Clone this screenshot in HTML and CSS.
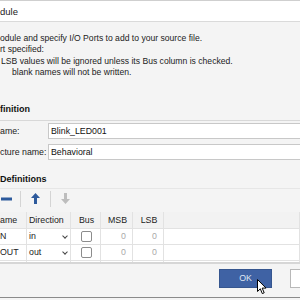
FILE: index.html
```html
<!DOCTYPE html>
<html lang="en">
<head>
    <meta charset="UTF-8">
    <title>Define Module</title>
    <link rel="stylesheet" href="styles.css">
</head>
<body>
    <div class="dialog">
        <div class="titlebar">dule</div>
        <div class="content">
            <p class="intro">
                <span class="line">odule and specify I/O Ports to add to your source file.</span>
                <span class="line">rt specified:</span>
                <span class="line l3">LSB values will be ignored unless its Bus column is checked.</span>
                <span class="line l4">blank names will not be written.</span>
            </p>

            <h2 class="section">finition</h2>
            <div class="fields">
                <div class="field">
                    <span class="label">ame:</span>
                    <input class="text" value="Blink_LED001">
                </div>
                <div class="field">
                    <span class="label">cture name:</span>
                    <input class="text" value="Behavioral">
                </div>
            </div>

            <h2 class="section ports">Definitions</h2>
            <div class="toolbar">
                <span class="tool"><svg width="11" height="4" viewBox="0 0 11 4"><rect width="11" height="3" y="0.5" fill="#2d5a9c"/></svg></span>
                <span class="sep"></span>
                <span class="tool"><svg width="9" height="11" viewBox="0 0 9 11"><path d="M4.5 0 L9 5 L6 5 L6 11 L3 11 L3 5 L0 5 Z" fill="#2d5a9c"/></svg></span>
                <span class="sep"></span>
                <span class="tool"><svg width="9" height="11" viewBox="0 0 9 11"><path d="M4.5 11 L9 6 L6 6 L6 0 L3 0 L3 6 L0 6 Z" fill="#bdbdbd"/></svg></span>
            </div>

            <div class="grid-wrap">
                <table class="ports-table">
                    <tr>
                        <th class="c-name">ame</th>
                        <th class="c-dir">Direction</th>
                        <th class="c-bus center">Bus</th>
                        <th class="c-msb center">MSB</th>
                        <th class="c-lsb center">LSB</th>
                        <th></th>
                    </tr>
                    <tr>
                        <td>N</td>
                        <td><div class="select">in<span class="chev"></span></div></td>
                        <td class="center"><span class="check"></span></td>
                        <td class="num">0</td>
                        <td class="num">0</td>
                        <td></td>
                    </tr>
                    <tr>
                        <td>OUT</td>
                        <td><div class="select">out<span class="chev"></span></div></td>
                        <td class="center"><span class="check"></span></td>
                        <td class="num">0</td>
                        <td class="num">0</td>
                        <td></td>
                    </tr>
                    <tr>
                        <td></td><td></td><td></td><td></td><td></td><td></td>
                    </tr>
                </table>
            </div>

            <div class="buttons">
                <button class="btn ok">OK</button>
                <button class="btn cancel">Cancel</button>
                <svg class="cursor" width="10" height="16" viewBox="0 0 10 16"><path d="M0.5 0.5 L0.5 12.5 L3.3 9.8 L5.3 14.6 L7.2 13.8 L5.2 9.1 L9 9.1 Z" fill="#fff" stroke="#000" stroke-width="1"/></svg>
            </div>
        </div>
    </div>
</body>
</html>
```

FILE: styles.css
```css
html, body {
    margin: 0;
    padding: 0;
}
body {
    width: 300px;
    height: 300px;
    overflow: hidden;
    background: #f4f4f4;
    font-family: "Liberation Sans", Arial, sans-serif;
    font-size: 8.8px;
    color: #222;
}
.dialog {
    height: 297px;
    border-bottom: 1px solid #8a8a8a;
    background: #f4f4f4;
    overflow: hidden;
}
.titlebar {
    height: 20px;
    line-height: 21px;
    background: #fff;
    border-top: 1px solid #cfcfcf;
    border-bottom: 1px solid #dadada;
    font-size: 9.5px;
}
.intro {
    margin: 0;
    padding-top: 11px;
    font-size: 8.6px;
    line-height: 11.4px;
}
.line {
    display: block;
    white-space: nowrap;
}
.l3 {
    padding-left: 1px;
}
.l4 {
    padding-left: 12px;
}
.section {
    margin: 25px 0 0;
    padding-bottom: 5px;
    border-bottom: 1px solid #d8d8d8;
    font-size: 9px;
    font-weight: bold;
    line-height: 11px;
    color: #111;
}
.fields {
    padding-top: 2px;
}
.field {
    display: flex;
    align-items: center;
    height: 17px;
    margin-bottom: 4px;
}
.label {
    width: 48px;
    white-space: nowrap;
}
.text {
    flex: 1;
    height: 16px;
    box-sizing: border-box;
    margin: 0;
    padding: 0 2px;
    border: 1px solid #c8c8c8;
    border-right: none;
    font: inherit;
    color: #111;
    background: #fff;
    outline: none;
}
.section.ports {
    margin-top: 13px;
    padding-bottom: 3px;
    border-bottom-color: #e6e6e6;
}
.toolbar {
    display: flex;
    align-items: center;
    height: 20px;
}
.tool {
    display: flex;
    align-items: center;
    justify-content: center;
    width: 15px;
}
.toolbar .tool:first-child {
    width: 12px;
    justify-content: flex-start;
    padding-left: 1px;
}
.sep {
    width: 1px;
    height: 16px;
    margin: 0 7px;
    background: #d4d4d4;
}
.grid-wrap {
    margin-top: 3px;
    height: 50px;
    overflow: hidden;
    border-bottom: 2px solid #d6d6d6;
}
.ports-table {
    width: 100%;
    border-collapse: collapse;
    table-layout: fixed;
    background: #fff;
}
.ports-table th,
.ports-table td {
    height: 15px;
    padding: 0 0 0 2px;
    border: 1px solid #e2e2e2;
    border-top: none;
    text-align: left;
    font-weight: normal;
    white-space: nowrap;
}
.ports-table th {
    height: 16px;
    background: #f2f2f2;
    color: #222;
}
.ports-table th:first-child,
.ports-table td:first-child {
    border-left: none;
    padding-left: 0;
}
.c-name { width: 26px; }
.c-dir { width: 41px; }
.c-bus { width: 27px; }
.c-msb { width: 29px; }
.c-lsb { width: 28px; }
.ports-table .center {
    text-align: center;
}
.ports-table .num {
    text-align: right;
    padding-right: 6px;
    color: #aaa;
}
.select {
    position: relative;
    padding-right: 10px;
}
.chev {
    position: absolute;
    right: 3px;
    top: 3px;
    width: 3px;
    height: 3px;
    border-right: 1px solid #444;
    border-bottom: 1px solid #444;
    transform: rotate(45deg);
}
.check {
    display: inline-block;
    width: 9px;
    height: 9px;
    vertical-align: middle;
    border: 1px solid #8c8c8c;
    border-radius: 2px;
    background: #fff;
}
.buttons {
    position: relative;
    display: flex;
    gap: 18px;
    padding: 5px 0 0 219px;
}
.btn {
    width: 53px;
    height: 19px;
    margin: 0;
    padding: 0;
    border: 1px solid #b8b8b8;
    background: #fff;
    font: inherit;
    color: #222;
    flex-shrink: 0;
}
.btn.ok {
    border-color: #36568f;
    background: #3f62a4;
    color: #dfe6f3;
}
.btn.cancel {
    text-indent: 40px;
}
.cursor {
    position: absolute;
    left: 257px;
    top: 15px;
}
```
